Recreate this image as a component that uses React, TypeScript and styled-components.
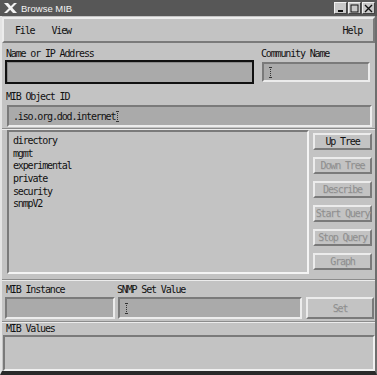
import React from 'react';
import styled, { createGlobalStyle, css } from 'styled-components';

const GlobalStyle = createGlobalStyle`
  html, body {
    margin: 0;
    padding: 0;
    background: #c3c3c3;
  }
  * { box-sizing: border-box; }
`;

const mono = css`
  font-family: 'DejaVu Sans Mono', 'Liberation Mono', monospace;
  font-size: 10px;
  letter-spacing: -1.15px;
  color: #111;
`;

const raised = css`
  border: 2px solid;
  border-color: #ececec #7a7a7a #7a7a7a #ececec;
`;

const sunken = css`
  border: 2px solid;
  border-color: #7a7a7a #ececec #ececec #7a7a7a;
`;

const Window = styled.div`
  width: 377px;
  height: 375px;
  display: flex;
  flex-direction: column;
  background: #c3c3c3;
  border-left: 2px solid #e4e4e4;
  border-right: 2px solid #6e6e6e;
  border-bottom: 4px solid #2a2a2a;
`;

const TitleBar = styled.div`
  height: 16px;
  margin: 0 -2px;
  background: #575757;
  display: flex;
  align-items: center;
  padding: 0 2px 0 3px;
  flex-shrink: 0;
`;

const Title = styled.span`
  font-family: 'Liberation Sans', Arial, sans-serif;
  font-size: 9.5px;
  color: #f2f2f2;
  margin-left: 3px;
  flex: 1;
`;

const TitleButton = styled.div`
  width: 13px;
  height: 12px;
  background: #c8c8c8;
  border: 1px solid;
  border-color: #f0f0f0 #444 #444 #f0f0f0;
  display: flex;
  align-items: center;
  justify-content: center;
  margin-left: 1px;
`;

const MenuBar = styled.div`
  ${raised};
  height: 26px;
  margin-top: 1px;
  display: flex;
  align-items: center;
  padding: 0 9px 0 9px;
  flex-shrink: 0;
`;

const MenuItem = styled.span<{ $right?: boolean }>`
  ${mono};
  padding: 0 2px;
  margin-right: 13px;
  ${(p) => p.$right && css`margin-left: auto; margin-right: 0;`}
`;

const Row = styled.div<{ $h: number; $mt?: number; $pl?: number; $pr?: number }>`
  display: flex;
  height: ${(p) => p.$h}px;
  margin-top: ${(p) => p.$mt ?? 0}px;
  flex-shrink: 0;
  padding: 0 ${(p) => p.$pr ?? 3}px 0 ${(p) => p.$pl ?? 3}px;
  align-items: center;
`;

const Label = styled.span<{ $w?: number }>`
  ${mono};
  width: ${(p) => (p.$w ? `${p.$w}px` : 'auto')};
  padding-left: 1px;
  flex-shrink: 0;
`;

const Field = styled.div<{ $w?: number; $h?: number; $ml?: number; $focus?: boolean }>`
  ${sunken};
  background: #aaaaaa;
  height: ${(p) => (p.$h ? `${p.$h}px` : '100%')};
  width: ${(p) => (p.$w ? `${p.$w}px` : 'auto')};
  flex: ${(p) => (p.$w ? 'none' : 1)};
  margin-left: ${(p) => p.$ml ?? 0}px;
  display: flex;
  align-items: center;
  padding-left: 4px;
  ${mono};
  ${(p) =>
    p.$focus &&
    css`
      border: 2px solid #111;
      box-shadow: inset 1px 1px 0 #8a8a8a;
    `}
`;

const Caret = styled.span`
  position: relative;
  display: inline-block;
  width: 3px;
  height: 11px;
  margin-left: 1px;
  border-left: 1px dotted #333;
  transform: translateX(1px);
  &::before,
  &::after {
    content: '';
    position: absolute;
    left: -2px;
    width: 3px;
    height: 1px;
    background: #333;
  }
  &::before { top: 0; }
  &::after { bottom: 0; }
`;

const Separator = styled.div<{ $mt?: number }>`
  height: 2px;
  margin-top: ${(p) => p.$mt ?? 0}px;
  border-top: 1px solid #8c8c8c;
  border-bottom: 1px solid #ececec;
  flex-shrink: 0;
`;

const Main = styled.div`
  display: flex;
  height: 146px;
  padding: 0 2px 2px 5px;
  flex-shrink: 0;
`;

const List = styled.div`
  ${sunken};
  width: 302px;
  height: 144px;
  background: #c3c3c3;
  padding: 3px 0 0 2px;
  display: flex;
  flex-direction: column;
  border-color: #7a7a7a #f4f4f4 #f4f4f4 #7a7a7a;
`;

const ListItem = styled.div`
  ${mono};
  height: 12.7px;
  line-height: 12.7px;
  padding-left: 2px;
`;

const ButtonColumn = styled.div`
  display: flex;
  flex-direction: column;
  gap: 7px;
  margin-left: 4px;
  padding-top: 3px;
`;

const Button = styled.div<{ $disabled?: boolean; $w?: number; $h?: number; $ml?: number }>`
  ${raised};
  ${mono};
  width: ${(p) => p.$w ?? 59}px;
  height: ${(p) => p.$h ?? 17}px;
  margin-left: ${(p) => p.$ml ?? 0}px;
  display: flex;
  align-items: center;
  justify-content: center;
  color: ${(p) => (p.$disabled ? '#8e8e8e' : '#111')};
  ${(p) => p.$disabled && css`text-shadow: 0.5px 0.5px 0 #b8b8b8;`}
  flex-shrink: 0;
`;

const ValuesBox = styled.div`
  ${sunken};
  height: 36px;
  margin: 1px 0 0 1px;
  background: #c3c3c3;
  border-color: #7a7a7a #f0f0f0 #f0f0f0 #7a7a7a;
  flex-shrink: 0;
`;

const XLogo = () => (
  <svg width="15" height="12" viewBox="0 0 15 12">
    <path d="M1 1 L5 1 L14 11 L10 11 Z" fill="#f2f2f2" />
    <path d="M14 1 L11 1 L1 11 L4 11 Z" fill="#f2f2f2" />
  </svg>
);

const entries = ['directory', 'mgmt', 'experimental', 'private', 'security', 'snmpV2'];

export default function App() {
  return (
    <>
      <GlobalStyle />
      <Window>
        <TitleBar>
          <XLogo />
          <Title>Browse MIB</Title>
          <TitleButton>
            <svg width="9" height="9" viewBox="0 0 9 9">
              <rect x="2" y="6" width="5" height="2" fill="#111" />
            </svg>
          </TitleButton>
          <TitleButton>
            <svg width="9" height="9" viewBox="0 0 9 9">
              <rect x="1" y="1" width="7" height="7" fill="none" stroke="#111" strokeWidth="1" />
            </svg>
          </TitleButton>
          <TitleButton>
            <svg width="9" height="9" viewBox="0 0 9 9">
              <path d="M1 1 L8 8 M8 1 L1 8" stroke="#111" strokeWidth="1.4" />
            </svg>
          </TitleButton>
        </TitleBar>

        <MenuBar>
          <MenuItem>File</MenuItem>
          <MenuItem>View</MenuItem>
          <MenuItem $right>Help</MenuItem>
        </MenuBar>

        <Row $h={14} $mt={3}>
          <Label $w={255}>Name or IP Address</Label>
          <Label>Community Name</Label>
        </Row>
        <Row $h={24}>
          <Field $w={249} $focus />
          <Field $w={108} $h={20} $ml={8}>
            <Caret />
          </Field>
        </Row>

        <Row $h={14} $mt={5}>
          <Label>MIB Object ID</Label>
        </Row>
        <Row $h={22} $mt={2} $pl={5}>
          <Field>
            .iso.org.dod.internet
            <Caret />
          </Field>
        </Row>

        <Separator $mt={1} />

        <Main>
          <List>
            {entries.map((e) => (
              <ListItem key={e}>{e}</ListItem>
            ))}
          </List>
          <ButtonColumn>
            <Button>Up Tree</Button>
            <Button $disabled>Down Tree</Button>
            <Button $disabled>Describe</Button>
            <Button $disabled>Start Query</Button>
            <Button $disabled>Stop Query</Button>
            <Button $disabled>Graph</Button>
          </ButtonColumn>
        </Main>

        <Separator $mt={3} />

        <Row $h={14} $mt={1}>
          <Label $w={111}>MIB Instance</Label>
          <Label>SNMP Set Value</Label>
        </Row>
        <Row $h={22} $mt={1} $pl={3} $pr={0}>
          <Field $w={110} />
          <Field $w={184} $ml={3}>
            <Caret />
          </Field>
          <Button $w={68} $h={22} $ml={4} $disabled>
            Set
          </Button>
        </Row>

        <Separator $mt={2} />

        <Row $h={11}>
          <Label>MIB Values</Label>
        </Row>
        <ValuesBox />
      </Window>
    </>
  );
}
